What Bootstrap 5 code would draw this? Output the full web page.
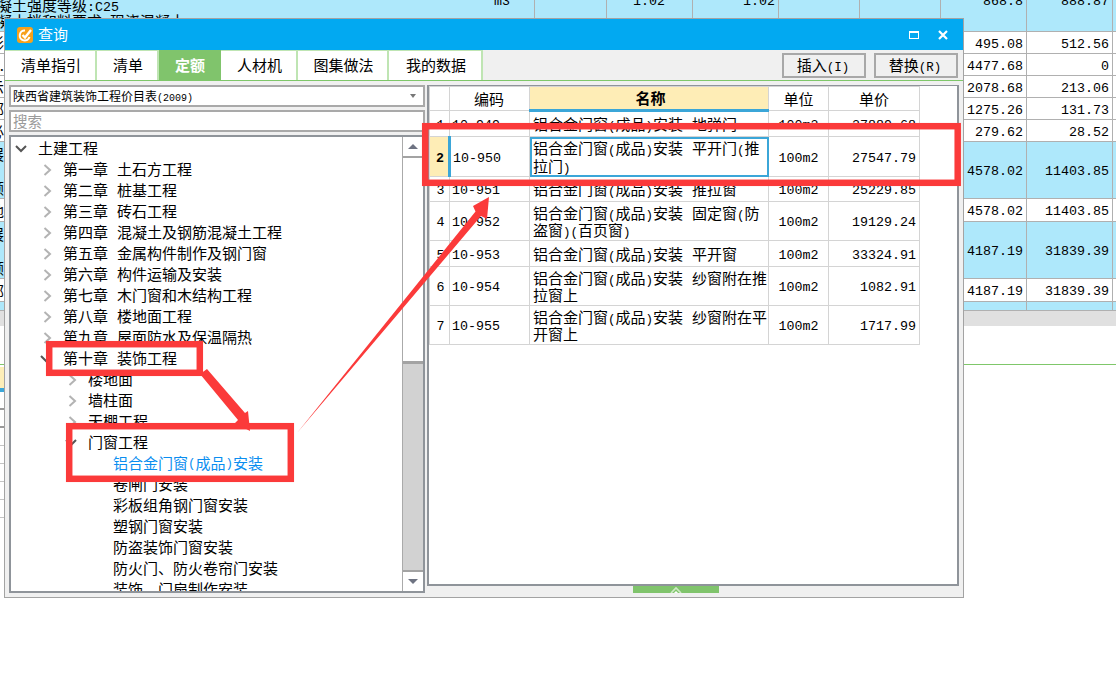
<!DOCTYPE html>
<html lang="zh-CN">
<head>
    <meta charset="UTF-8">
    <meta name="viewport" content="width=device-width, initial-scale=1.0">
    <title>查询</title>
    <link href="https://cdn.jsdelivr.net/npm/bootstrap@5.3.0/dist/css/bootstrap.min.css" rel="stylesheet">
    <style>
        body { background: #fff; color: #000; font-family: "Noto Sans CJK SC", sans-serif; font-size: 15px; overflow: hidden; }
        .stage { position: relative; width: 1116px; height: 683px; overflow: hidden; }
        .hw { font-family: "Liberation Mono", "Noto Sans CJK SC", monospace; font-style: normal; font-size: 12.5px; line-height: 0; }
        .sp { display: inline-block; width: 9px; line-height: 0; }
        .num { font-family: "Liberation Mono", "Noto Sans CJK SC", monospace; font-size: 13.33px; }

        /* spreadsheet behind the dialog */
        .sheet { position: absolute; left: 0; top: -32px; width: 1116px; }
        .sheet-row { display: grid; grid-template-columns: 490px 45px 72px 86px 86px 81px 81px 86px 86px 3px; border-bottom: 1px solid #b0b0b0; }
        .sheet-row > div { border-right: 1px solid #b0b0b0; display: flex; align-items: center; justify-content: flex-end; padding-right: 3px; overflow: hidden; }
        .sheet-row > div.num { padding-top: 4px; }
        .sheet-row > div.frag-cell { border-right: 0; padding: 0; justify-content: flex-start; }
        .sheet-row.blue { background: #aee8fb; }
        .frag { width: 4px; overflow: hidden; display: flex; flex-direction: column; align-items: flex-end; line-height: 17px; white-space: nowrap; }
        .top-text { line-height: 15.5px; margin-left: -3px; white-space: nowrap; align-self: flex-end; padding-bottom: 3px; }
        .top-text .num { line-height: 0; }
        .mid-num { padding-right: 27px !important; }
        .h22 { height: 22px; } .h23 { height: 23px; } .h57 { height: 57px; } .h9 { height: 9px; } .h64 { height: 64px; }
        .sheet-scroll { height: 15px; background: #e0e0e0; }
        .sheet-blank { height: 38px; }
        .sheet-green { height: 1px; background: #7fc76a; }
        .tail { width: 4px; padding-top: 2px; }
        .tail-y { height: 21px; background: #fdeeb8; border-bottom: 4px solid #3ba6d8; box-sizing: content-box; }
        .tail-gap { height: 18px; border-bottom: 1px solid #c4c4c4; }
        .tail-gap.dk { border-bottom: 2px solid #999; }

        /* dialog */
        .win { position: absolute; left: 4px; top: 18px; width: 960px; height: 580px; background: #f0f0f0; border: 1px solid #a3a3a3; }
        .win-title { height: 31px; background: #02a9f1; color: #fff; padding: 0 15px 0 12px; }
        .win-title svg { display: block; }
        .title-close { margin-left: 19px; }
        .title-logo { margin-right: 5px; }
        .win-tools { height: 31px; border-bottom: 1px solid #7fc76a; }
        .tab-item { display: flex; align-items: center; justify-content: center; height: 30px; padding-left: 2px; background: #fff; color: #000; border-right: 2px solid #bfe5b3; border-top: 1px solid #bfe5b3; text-decoration: none; }
        .tab-item:hover { color: #000; }
        .tab-item.on { background: #80c46c; color: #fff; font-weight: 700; border-color: #80c46c; }
        .w-a { width: 92px; } .w-b { width: 62px; } .w-c { width: 62px; } .w-d { width: 77px; } .w-e { width: 91px; } .w-f { width: 94px; }
        .tool-btn { width: 84px; height: 25px; padding: 0 2px 2px 0; border: 2px solid #a8a8a8; border-radius: 0; background: #f0f0f0; color: #000; font-size: 15px; line-height: 20px; }
        .tool-group { gap: 8px; padding: 3px 5px 0 0; }

        .win-body { padding: 4px 0 0 4px; gap: 2px; }
        .left-pane { width: 416px; gap: 3px; }
        .combo, .search-box { height: 22px; background: #fff; border: 2px solid #a9a9a9; padding: 0 7px 0 2px; }
        .combo { font-size: 12px; }
        .combo .hw { font-size: 10px; }
        .combo-arrow { width: 0; height: 0; border-left: 3px solid transparent; border-right: 3px solid transparent; border-top: 4px solid #777; }
        .search-box { color: #9a9a9a; font-size: 14.5px; }
        .tree-box { height: 458px; background: #fff; border: 2px solid #8f949a; }
        .tree-list { padding-top: 1px; overflow: hidden; }
        .tree-row { height: 21px; display: flex; align-items: center; white-space: nowrap; }
        .lv0 { padding-left: 27px; } .lv1 { padding-left: 52px; } .lv2 { padding-left: 77px; } .lv3 { padding-left: 102px; }
        .tree-row.cur { color: #0a8ef0; }
        .chev-d { width: 12px; height: 10px; margin-left: -23px; margin-right: 11px; flex: none; }
        .chev-r { width: 12px; height: 12px; margin-left: -20px; margin-right: 8px; flex: none; }
        .sbar { width: 21px; background: #d2d2d2; border-left: 1px solid #aaa; }
        .sbar-btn { height: 21px; background: #fff; border-bottom: 2px solid #a3a3a3; }
        .sbar-btn.dn { border-bottom: 0; border-top: 2px solid #a3a3a3; }
        .sbar-thumb { height: 206px; background: #fff; border-bottom: 3px solid #a3a3a3; }
        .tri-up { width: 0; height: 0; border-left: 5px solid transparent; border-right: 5px solid transparent; border-bottom: 5px solid #6e7382; }
        .tri-dn { width: 0; height: 0; border-left: 5px solid transparent; border-right: 5px solid transparent; border-top: 5px solid #6e7382; }

        .right-pane { position: relative; width: 532px; height: 501px; background: #fff; border: 2px solid #8f949a; border-top-width: 1px; }
        .qtable { width: 490px; table-layout: fixed; --bs-table-border-color: #d4d4d4; --bs-table-bg: #fff; font-size: 15px; line-height: 17.5px; margin: 0; }
        .qtable > :not(caption) > * > * { padding: 0 3px; vertical-align: middle; color: #000; border-color: #d4d4d4; white-space: nowrap; }
        .qtable .c-no { width: 20px; padding: 0 0 0 2px; text-align: center; }
        .qtable .c-code { width: 80px; padding-left: 2px; }
        .qtable .c-name { width: 239px; padding-right: 0; }
        .qtable .c-unit { width: 60px; text-align: center; }
        .qtable .c-price { width: 91px; text-align: right; }
        .qtable > tbody > tr > td.num { padding-top: 4px; }
        .qtable th { font-weight: 400; text-align: center; }
        .qtable th.c-price { text-align: center; }
        .qtable th.sorted { background: #feedb6; font-weight: 700; border-bottom: 3px solid #3ba6d8; }
        .qtable td.c-no.sel { background: #feedb6; font-weight: 700; border-right: 3px solid #3ba6d8; }
        .qtable td.c-name.sel { outline: 2px solid #3ba6d8; outline-offset: -2px; }
        .r24 { height: 24px; } .r25 { height: 25px; } .r26 { height: 26px; } .r39 { height: 39px; } .r40 { height: 40px; }
        .grip { position: absolute; left: 628px; top: 567px; width: 86px; height: 7px; background: #80c46c; overflow: hidden; }
        .grip svg { display: block; margin: 0 auto; }

        .marks { position: absolute; left: 0; top: 0; pointer-events: none; }
    </style>
</head>
<body>
<svg width="0" height="0" class="position-absolute">
    <symbol id="i-down" viewBox="0 0 12 10"><polyline points="1,2 6,7 11,2" fill="none" stroke="#555" stroke-width="2"/></symbol>
    <symbol id="i-right" viewBox="0 0 12 12"><polyline points="1.5,1 7,6 1.5,11" fill="none" stroke="#b3b3b3" stroke-width="2"/></symbol>
</svg>

<div class="stage">
    <!-- таблица под окном -->
    <div class="sheet">
        <div class="sheet-row blue h64">
            <div class="frag-cell"><div class="top-text">凝土强度等级<span class="num">:C25</span><br>凝土拌和料要求<span class="num">:</span>现浇混凝土</div></div>
            <div class="num justify-content-start ps-1">m3</div><div></div><div class="num mid-num">1.02</div><div class="num">1.02</div><div></div><div></div><div class="num">868.8</div><div class="num">888.87</div>
        </div>
        <div class="sheet-row h22"><div class="frag-cell"><div class="frag">彩</div></div><div></div><div></div><div></div><div></div><div></div><div></div><div class="num">495.08</div><div class="num">512.56</div></div>
        <div class="sheet-row h22"><div class="frag-cell"><div class="frag">.</div></div><div></div><div></div><div></div><div></div><div></div><div></div><div class="num">4477.68</div><div class="num">0</div></div>
        <div class="sheet-row h22"><div class="frag-cell"><div class="frag">示</div></div><div></div><div></div><div></div><div></div><div></div><div></div><div class="num">2078.68</div><div class="num">213.06</div></div>
        <div class="sheet-row h22"><div class="frag-cell"><div class="frag">部</div></div><div></div><div></div><div></div><div></div><div></div><div></div><div class="num">1275.26</div><div class="num">131.73</div></div>
        <div class="sheet-row h22"><div class="frag-cell"><div class="frag">必</div></div><div></div><div></div><div></div><div></div><div></div><div></div><div class="num">279.62</div><div class="num">28.52</div></div>
        <div class="sheet-row blue h57"><div class="frag-cell"><div class="frag">展<span>‖</span>颜</div></div><div></div><div></div><div></div><div></div><div></div><div></div><div class="num">4578.02</div><div class="num">11403.85</div></div>
        <div class="sheet-row h23"><div class="frag-cell"><div class="frag">地</div></div><div></div><div></div><div></div><div></div><div></div><div></div><div class="num">4578.02</div><div class="num">11403.85</div></div>
        <div class="sheet-row blue h57"><div class="frag-cell"><div class="frag">展<span>‖</span>颜</div></div><div></div><div></div><div></div><div></div><div></div><div></div><div class="num">4187.19</div><div class="num">31839.39</div></div>
        <div class="sheet-row h23"><div class="frag-cell"><div class="frag">部</div></div><div></div><div></div><div></div><div></div><div></div><div></div><div class="num">4187.19</div><div class="num">31839.39</div></div>
        <div class="sheet-row blue h9"><div class="frag-cell"></div><div></div><div></div><div></div><div></div><div></div><div></div><div></div><div></div></div>
        <div class="sheet-scroll"></div>
        <div class="sheet-blank"></div>
        <div class="sheet-green"></div>
        <div class="tail">
            <div class="tail-y"></div>
            <div class="tail-gap dk"></div>
            <div class="tail-gap dk"></div>
            <div class="tail-gap"></div>
            <div class="tail-gap"></div>
            <div class="tail-gap"></div>
            <div class="tail-gap"></div>
            <div class="tail-gap"></div>
        </div>
    </div>

    <!-- окно запроса -->
    <div class="win d-flex flex-column">
        <div class="win-title d-flex align-items-center flex-shrink-0">
            <svg width="16" height="16" viewBox="0 0 16 16" class="title-logo">
                <rect width="16" height="16" rx="3" fill="#f7a11b"/>
                <path d="M8 3.5 A5 5 0 1 0 12.5 10" fill="none" stroke="#fff" stroke-width="2"/>
                <path d="M5.5 8 L8 10.5 L14 3" fill="none" stroke="#fff" stroke-width="2.4"/>
            </svg>
            <span>查询</span>
            <svg width="10" height="8" viewBox="0 0 10 8" class="ms-auto">
                <rect x="0.5" y="1" width="9" height="6.5" fill="none" stroke="#fff"/>
                <rect x="0" y="0" width="10" height="2" fill="#fff"/>
            </svg>
            <svg width="10" height="10" viewBox="0 0 10 10" class="title-close">
                <path d="M1 1 L9 9 M9 1 L1 9" stroke="#fff" stroke-width="2.2"/>
            </svg>
        </div>
        <div class="win-tools d-flex justify-content-between flex-shrink-0">
            <div class="d-flex">
                <a class="tab-item w-a" href="#">清单指引</a>
                <a class="tab-item w-b" href="#">清单</a>
                <a class="tab-item w-c on" href="#">定额</a>
                <a class="tab-item w-d" href="#">人材机</a>
                <a class="tab-item w-e" href="#">图集做法</a>
                <a class="tab-item w-f" href="#">我的数据</a>
            </div>
            <div class="d-flex tool-group">
                <button type="button" class="btn tool-btn">插入<i class="hw">(I)</i></button>
                <button type="button" class="btn tool-btn">替换<i class="hw">(R)</i></button>
            </div>
        </div>
        <div class="win-body d-flex align-items-start">
            <div class="left-pane d-flex flex-column">
                <div class="combo d-flex align-items-center justify-content-between">
                    <span>陕西省建筑装饰工程价目表<i class="hw">(2009)</i></span>
                    <span class="combo-arrow"></span>
                </div>
                <div class="search-box d-flex align-items-center">搜索</div>
                <div class="tree-box d-flex">
                    <div class="tree-list flex-grow-1">
                        <div class="tree-row lv0"><svg class="chev-d"><use href="#i-down"/></svg>土建工程</div>
                        <div class="tree-row lv1"><svg class="chev-r"><use href="#i-right"/></svg>第一章<i class="sp"></i>土石方工程</div>
                        <div class="tree-row lv1"><svg class="chev-r"><use href="#i-right"/></svg>第二章<i class="sp"></i>桩基工程</div>
                        <div class="tree-row lv1"><svg class="chev-r"><use href="#i-right"/></svg>第三章<i class="sp"></i>砖石工程</div>
                        <div class="tree-row lv1"><svg class="chev-r"><use href="#i-right"/></svg>第四章<i class="sp"></i>混凝土及钢筋混凝土工程</div>
                        <div class="tree-row lv1"><svg class="chev-r"><use href="#i-right"/></svg>第五章<i class="sp"></i>金属构件制作及钢门窗</div>
                        <div class="tree-row lv1"><svg class="chev-r"><use href="#i-right"/></svg>第六章<i class="sp"></i>构件运输及安装</div>
                        <div class="tree-row lv1"><svg class="chev-r"><use href="#i-right"/></svg>第七章<i class="sp"></i>木门窗和木结构工程</div>
                        <div class="tree-row lv1"><svg class="chev-r"><use href="#i-right"/></svg>第八章<i class="sp"></i>楼地面工程</div>
                        <div class="tree-row lv1"><svg class="chev-r"><use href="#i-right"/></svg>第九章<i class="sp"></i>屋面防水及保温隔热</div>
                        <div class="tree-row lv1"><svg class="chev-d"><use href="#i-down"/></svg>第十章<i class="sp"></i>装饰工程</div>
                        <div class="tree-row lv2"><svg class="chev-r"><use href="#i-right"/></svg>楼地面</div>
                        <div class="tree-row lv2"><svg class="chev-r"><use href="#i-right"/></svg>墙柱面</div>
                        <div class="tree-row lv2"><svg class="chev-r"><use href="#i-right"/></svg>天棚工程</div>
                        <div class="tree-row lv2"><svg class="chev-d"><use href="#i-down"/></svg>门窗工程</div>
                        <div class="tree-row lv3 cur">铝合金门窗<i class="hw">(</i>成品<i class="hw">)</i>安装</div>
                        <div class="tree-row lv3">卷闸门安装</div>
                        <div class="tree-row lv3">彩板组角钢门窗安装</div>
                        <div class="tree-row lv3">塑钢门窗安装</div>
                        <div class="tree-row lv3">防盗装饰门窗安装</div>
                        <div class="tree-row lv3">防火门、防火卷帘门安装</div>
                        <div class="tree-row lv3">装饰、门扇制作安装</div>
                    </div>
                    <div class="sbar d-flex flex-column flex-shrink-0">
                        <div class="sbar-btn d-flex align-items-center justify-content-center"><span class="tri-up"></span></div>
                        <div class="sbar-thumb"></div>
                        <div class="sbar-btn dn d-flex align-items-center justify-content-center mt-auto"><span class="tri-dn"></span></div>
                    </div>
                </div>
            </div>
            <div class="right-pane">
                <table class="table table-bordered qtable">
                    <thead>
                        <tr class="r24"><th class="c-no"></th><th class="c-code">编码</th><th class="c-name sorted">名称</th><th class="c-unit">单位</th><th class="c-price">单价</th></tr>
                    </thead>
                    <tbody>
                        <tr class="r26"><td class="c-no num">1</td><td class="c-code num">10-949</td><td class="c-name">铝合金门窗<i class="hw">(</i>成品<i class="hw">)</i>安装<i class="sp"></i>地弹门</td><td class="c-unit num">100m2</td><td class="c-price num">27889.68</td></tr>
                        <tr class="r40"><td class="c-no num sel">2</td><td class="c-code num">10-950</td><td class="c-name sel">铝合金门窗<i class="hw">(</i>成品<i class="hw">)</i>安装<i class="sp"></i>平开门<i class="hw">(</i>推<br>拉门<i class="hw">)</i></td><td class="c-unit num">100m2</td><td class="c-price num">27547.79</td></tr>
                        <tr class="r25"><td class="c-no num">3</td><td class="c-code num">10-951</td><td class="c-name">铝合金门窗<i class="hw">(</i>成品<i class="hw">)</i>安装<i class="sp"></i>推拉窗</td><td class="c-unit num">100m2</td><td class="c-price num">25229.85</td></tr>
                        <tr class="r39"><td class="c-no num">4</td><td class="c-code num">10-952</td><td class="c-name">铝合金门窗<i class="hw">(</i>成品<i class="hw">)</i>安装<i class="sp"></i>固定窗<i class="hw">(</i>防<br>盗窗<i class="hw">)(</i>百页窗<i class="hw">)</i></td><td class="c-unit num">100m2</td><td class="c-price num">19129.24</td></tr>
                        <tr class="r26"><td class="c-no num">5</td><td class="c-code num">10-953</td><td class="c-name">铝合金门窗<i class="hw">(</i>成品<i class="hw">)</i>安装<i class="sp"></i>平开窗</td><td class="c-unit num">100m2</td><td class="c-price num">33324.91</td></tr>
                        <tr class="r39"><td class="c-no num">6</td><td class="c-code num">10-954</td><td class="c-name">铝合金门窗<i class="hw">(</i>成品<i class="hw">)</i>安装<i class="sp"></i>纱窗附在推<br>拉窗上</td><td class="c-unit num">100m2</td><td class="c-price num">1082.91</td></tr>
                        <tr class="r39"><td class="c-no num">7</td><td class="c-code num">10-955</td><td class="c-name">铝合金门窗<i class="hw">(</i>成品<i class="hw">)</i>安装<i class="sp"></i>纱窗附在平<br>开窗上</td><td class="c-unit num">100m2</td><td class="c-price num">1717.99</td></tr>
                    </tbody>
                </table>
            </div>
        </div>
        <div class="grip">
            <svg width="14" height="7" viewBox="0 0 14 7"><path d="M2 7 L7 2 L12 7" fill="none" stroke="#cfeac6" stroke-width="1.6"/><path d="M5 7 L7 5 L9 7 Z" fill="#fff"/></svg>
        </div>
    </div>

    <!-- красные пометки поверх скриншота -->
    <svg class="marks" width="1116" height="683" viewBox="0 0 1116 683">
        <g fill="none" stroke="#fb3a3a" stroke-width="6.5">
            <rect x="425.2" y="126.2" width="532.5" height="56.6"/>
            <rect x="49.2" y="344.2" width="150.6" height="28.6"/>
            <rect x="69.2" y="426.2" width="221.6" height="52.6"/>
        </g>
        <g fill="#fb3a3a">
            <polygon points="200,374 207,369 245,413 248,411 250,431 235,423 238,420"/>
            <polygon points="297,433 475.5,211.5 473,206 489,197 487,219 481,216"/>
        </g>
    </svg>
</div>
<script src="https://cdn.jsdelivr.net/npm/bootstrap@5.3.0/dist/js/bootstrap.bundle.min.js"></script>
</body>
</html>
